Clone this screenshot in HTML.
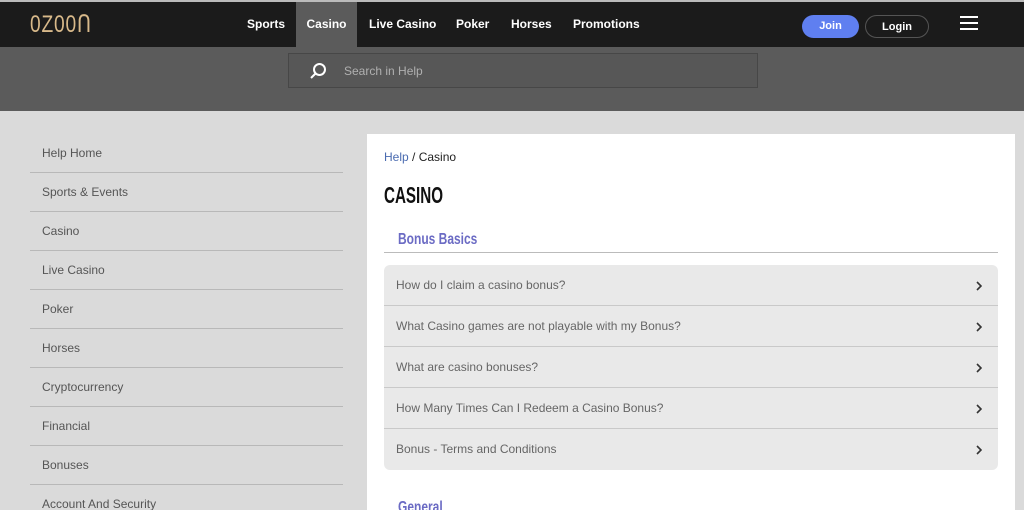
<!DOCTYPE html>
<html><head><meta charset="utf-8"><style>
*{margin:0;padding:0;box-sizing:border-box}
html,body{width:1024px;height:510px;overflow:hidden}
body{background:#dadada;font-family:"Liberation Sans",sans-serif;position:relative}
.top{position:absolute;left:0;top:0;width:1024px;height:47px;background:#1b1b1b;border-top:2px solid #bbb}
.logo{position:absolute;left:30px;top:8px;color:#d8b98a;font-size:24px;letter-spacing:1px;transform:scaleX(.8);transform-origin:left}
.nav a{position:absolute;top:0;height:45px;line-height:44px;color:#fff;font-size:12px;font-weight:bold;text-decoration:none}
.band{position:absolute;left:0;top:47px;width:1024px;height:64px;background:#5b5b5b}
.search{position:absolute;left:288px;top:53px;width:470px;height:35px;border:1px solid #474747;background:#575757}
.search span{position:absolute;left:55px;top:10px;color:#b0b0b0;font-size:12px}
.btn{position:absolute;top:13px;height:23px;border-radius:12px;font-size:11px;font-weight:bold;color:#fff;text-align:center;line-height:22px}
.side{position:absolute;left:30px;top:134px;width:313px}
.side div{height:39px;border-bottom:1px solid #b8b8b8;padding-left:12px;line-height:38px;font-size:12px;color:#555}
.panel{position:absolute;left:367px;top:134px;width:648px;height:400px;background:#fff}
.nar{font-weight:bold;transform-origin:left;white-space:nowrap}
.faq{position:absolute;left:17px;top:131px;width:614px;background:#e9e9e9;border-radius:6px}
.faq div{height:41px;border-bottom:1px solid #c9c9c9;padding-left:12px;line-height:41px;font-size:12px;color:#666;position:relative}
.faq div:last-child{border-bottom:none}
.faq svg{position:absolute;right:16px;top:16px}
</style></head><body>
<div class="top">
<div class="logo">0Z00Ո</div>
<div class="nav">
<a style="left:247px">Sports</a>
<a style="left:296px;width:61px;background:#5b5b5b;text-align:center">Casino</a>
<a style="left:369px">Live Casino</a>
<a style="left:456px">Poker</a>
<a style="left:511px">Horses</a>
<a style="left:573px">Promotions</a>
</div>
<div class="btn" style="left:802px;width:57px;background:#5f7ff0">Join</div>
<div class="btn" style="left:865px;width:64px;border:1px solid #555">Login</div>
<div style="position:absolute;left:960px;top:14px;width:18px;height:2px;background:#fff;box-shadow:0 6px 0 #fff,0 12px 0 #fff"></div>
</div>
<div class="band"></div>
<div class="search"><svg style="position:absolute;left:20px;top:8px" width="18" height="18" viewBox="0 0 18 18"><circle cx="10.5" cy="7.5" r="5.5" fill="none" stroke="#fff" stroke-width="2"/><path d="M6.5 11.5L2 16" stroke="#fff" stroke-width="2"/></svg><span>Search in Help</span></div>
<div class="side">
<div>Help Home</div><div>Sports &amp; Events</div><div>Casino</div><div>Live Casino</div><div>Poker</div><div>Horses</div><div>Cryptocurrency</div><div>Financial</div><div>Bonuses</div><div>Account And Security</div>
</div>
<div class="panel">
<div style="position:absolute;left:17px;top:16px;font-size:12px;color:#222"><span style="color:#4a6bb0">Help</span> / Casino</div>
<div class="nar" style="position:absolute;left:17px;top:48px;font-size:23px;color:#111;transform:scaleX(.66)">CASINO</div>
<div class="nar" style="position:absolute;left:31px;top:97px;font-size:16px;color:#6b6bc4;transform:scaleX(.75)">Bonus Basics</div>
<div style="position:absolute;left:17px;top:118px;width:614px;height:1px;background:#bbb"></div>
<div class="faq">
<div>How do I claim a casino bonus?<svg width="6" height="10" viewBox="0 0 6 10"><path d="M1 1l4 4-4 4" fill="none" stroke="#333" stroke-width="1.6"/></svg></div>
<div>What Casino games are not playable with my Bonus?<svg width="6" height="10" viewBox="0 0 6 10"><path d="M1 1l4 4-4 4" fill="none" stroke="#333" stroke-width="1.6"/></svg></div>
<div>What are casino bonuses?<svg width="6" height="10" viewBox="0 0 6 10"><path d="M1 1l4 4-4 4" fill="none" stroke="#333" stroke-width="1.6"/></svg></div>
<div>How Many Times Can I Redeem a Casino Bonus?<svg width="6" height="10" viewBox="0 0 6 10"><path d="M1 1l4 4-4 4" fill="none" stroke="#333" stroke-width="1.6"/></svg></div>
<div>Bonus - Terms and Conditions<svg width="6" height="10" viewBox="0 0 6 10"><path d="M1 1l4 4-4 4" fill="none" stroke="#333" stroke-width="1.6"/></svg></div>
</div>
<div class="nar" style="position:absolute;left:31px;top:365px;font-size:16px;color:#6b6bc4;transform:scaleX(.75)">General</div>
</div>
</body></html>
